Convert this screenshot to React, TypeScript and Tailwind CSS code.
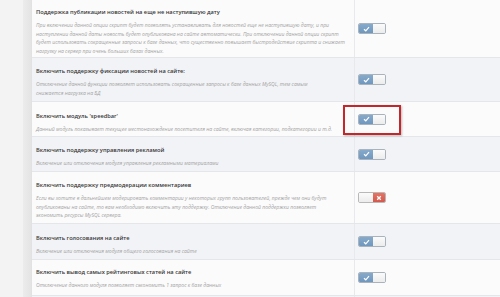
import React from "react";

type Row = {
  title: string;
  desc: string[];
  h: number;
  gray: boolean;
  on: boolean;
  highlight?: boolean;
  pt: number;
};

const rows: Row[] = [
  {
    title: "Поддержка публикации новостей на еще не наступившую дату",
    desc: [
      "При включении данной опции скрипт будет позволять устанавливать для новостей еще не наступившую дату, и при",
      "наступлении данной даты новость будет опубликована на сайте автоматически. При отключении данной опции скрипт",
      "будет использовать сокращенные запросы к базе данных, что существенно повышает быстродействие скрипта и снижает",
      "нагрузку на сервер при очень больших базах данных.",
    ],
    h: 58,
    gray: false,
    on: true,
    pt: 8,
  },
  {
    title: "Включить поддержку фиксации новостей на сайте:",
    desc: [
      "Отключение данной функции позволяет использовать сокращенные запросы к базе данных MySQL, тем самым",
      "снижается нагрузка на БД",
    ],
    h: 44,
    gray: true,
    on: true,
    pt: 9,
  },
  {
    title: "Включить модуль 'speedbar'",
    desc: [
      "Данный модуль показывает текущее местонахождение посетителя на сайте, включая категории, подкатегории и т.д.",
    ],
    h: 35,
    gray: false,
    on: true,
    highlight: true,
    pt: 10,
  },
  {
    title: "Включить поддержку управления рекламой",
    desc: ["Включение или отключения модуля управления рекламными материалами"],
    h: 35,
    gray: true,
    on: true,
    pt: 9,
  },
  {
    title: "Включить поддержку предмодерации комментариев",
    desc: [
      "Если вы хотите в дальнейшем модерировать комментарии у некоторых групп пользователей, прежде чем они будут",
      "опубликованы на сайте, то вам необходимо включить эту поддержку. Отключение данной поддержки позволяет",
      "экономить ресурсы MySQL сервера.",
    ],
    h: 52,
    gray: false,
    on: false,
    pt: 9,
  },
  {
    title: "Включить голосования на сайте",
    desc: ["Включение или отключения модуля общего голосования на сайте"],
    h: 36,
    gray: true,
    on: true,
    pt: 10,
  },
  {
    title: "Включить вывод самых рейтинговых статей на сайте",
    desc: ["Отключение данного модуля позволяет сэкономить 1 запрос к базе данных"],
    h: 36,
    gray: false,
    on: true,
    pt: 8,
  },
];

function Toggle({ on }: { on: boolean }) {
  if (on) {
    return (
      <div className="flex h-[11px] w-[28px] overflow-hidden rounded-[2px] border border-[#a9b3bd]">
        <div className="flex w-[14px] items-center justify-center bg-gradient-to-b from-[#87aacb] to-[#6f97bd]">
          <svg width="7" height="6" viewBox="0 0 7 6">
            <path d="M1 3.2 L2.8 4.8 L6 1.2" stroke="#fff" strokeWidth="1.2" fill="none" />
          </svg>
        </div>
        <div className="flex-1 bg-gradient-to-b from-[#fbfbfb] to-[#ececec]" />
      </div>
    );
  }
  return (
    <div className="flex h-[11px] w-[28px] overflow-hidden rounded-[2px] border border-[#b8b8b8]">
      <div className="w-[14px] bg-gradient-to-b from-[#fbfbfb] to-[#ececec]" />
      <div className="flex flex-1 items-center justify-center bg-gradient-to-b from-[#e47467] to-[#d4584b]">
        <svg width="6" height="6" viewBox="0 0 6 6">
          <path d="M1.2 1.2 L4.8 4.8 M4.8 1.2 L1.2 4.8" stroke="#fff" strokeWidth="1.3" />
        </svg>
      </div>
    </div>
  );
}

export default function App() {
  return (
    <div
      className="flex h-[297px] w-[500px] overflow-hidden bg-[#f4f4f4]"
      style={{ fontFamily: '"Open Sans", "Liberation Sans", sans-serif' }}
    >
      <div className="w-[23px] shrink-0 bg-[#f3f3f3]" />
      <div className="w-[9px] shrink-0 border-r border-[#e2e2e2] bg-gradient-to-r from-[#ececec] to-[#e4e4e4]" />
      <div className="flex min-w-0 flex-1 flex-col">
        {rows.map((r, i) => (
          <div
            key={i}
            className={`flex shrink-0 border-b border-[#e4e6ea] ${r.gray ? "bg-[#f2f3f6]" : "bg-[#fbfbfb]"}`}
            style={{ height: r.h }}
          >
            <div
              className="w-[323px] shrink-0 overflow-hidden border-r border-[#e8e9ec] pl-[4px]"
              style={{ paddingTop: r.pt }}
            >
              <div className="whitespace-nowrap text-[5.7px] font-semibold leading-[9px] text-[#383838]">
                {r.title}
              </div>
              <div className="mt-[4px] text-[5.1px] italic leading-[8.5px] text-[#a3a3a3]">
                {r.desc.map((d, j) => (
                  <div key={j} className="whitespace-nowrap">
                    {d}
                  </div>
                ))}
              </div>
            </div>
            <div className="relative flex flex-1 items-center pl-[3px]">
              <Toggle on={r.on} />
              {r.highlight && (
                <div className="absolute left-[-12px] top-[3px] h-[30px] w-[58px] border-2 border-[#c4262b] shadow-[1px_1px_2px_rgba(0,0,0,0.25)]" />
              )}
            </div>
          </div>
        ))}
        <div className="flex-1 bg-[#f2f3f6]">
          <div className="h-full w-[323px] border-r border-[#e8e9ec]" />
        </div>
      </div>
    </div>
  );
}
